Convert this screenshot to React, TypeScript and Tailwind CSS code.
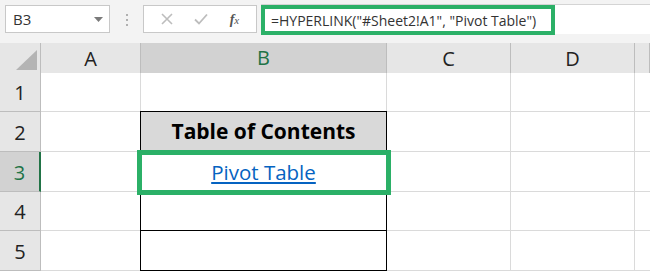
import React from "react";

const font = { fontFamily: '"Open Sans", "Noto Sans", sans-serif' };

function Toolbar() {
  return (
    <div className="flex h-[43px] bg-[#f3f3f3] pt-[4px]">
      <div className="ml-[5px] mt-[1px] flex h-[28px] w-[105px] items-center justify-between border border-[#c8c8c8] bg-white pl-[7px] pr-[6px]">
        <span className="text-[15px] text-[#333]">B3</span>
        <svg width="9" height="5" viewBox="0 0 9 5"><path d="M0 0h9L4.5 5z" fill="#7a7a7a" /></svg>
      </div>
      <div className="flex w-[33px] flex-col items-center justify-center gap-[3px] pb-[8px]">
        <span className="h-[2px] w-[2px] bg-[#b0b0b0]" />
        <span className="h-[2px] w-[2px] bg-[#b0b0b0]" />
        <span className="h-[2px] w-[2px] bg-[#b0b0b0]" />
      </div>
      <div className="mt-[1px] flex h-[28px] w-[114px] items-center justify-around border border-[#c8c8c8] bg-white px-[6px]">
        <svg width="12" height="12" viewBox="0 0 12 12"><path d="M1 1l10 10M11 1L1 11" stroke="#bdbdbd" strokeWidth="1.6" /></svg>
        <svg width="14" height="12" viewBox="0 0 14 12"><path d="M1 6.5l4 4L13 1.5" stroke="#bdbdbd" strokeWidth="1.8" fill="none" /></svg>
        <span className="text-[14px] italic text-[#555]" style={{ fontFamily: '"Liberation Serif", serif' }}>
          <b>f</b><span className="text-[11px]">x</span>
        </span>
      </div>
      <div className="ml-[4px] flex h-[30px] flex-1 border-t border-[#d4d4d4] bg-white">
        <div className="flex h-[30px] w-[294px] items-center border-[4px] border-[#2bb067] pl-[6px]">
          <span className="whitespace-nowrap text-[14px] text-[#333]" style={font}>
            =HYPERLINK("#Sheet2!A1", "Pivot Table")
          </span>
        </div>
      </div>
    </div>
  );
}

const cols = ["A", "B", "C", "D", ""];

function Header() {
  return (
    <div className="grid h-[30px] grid-cols-[41px_100px_246px_124px_124px_1fr] bg-[#e6e6e6]">
      <div className="relative border-r border-b border-[#bdbdbd]">
        <svg className="absolute left-[16px] top-[7px]" width="21" height="20" viewBox="0 0 21 20"><path d="M21 0v20H0z" fill="#b4b4b4" /></svg>
      </div>
      {cols.map((c, i) => (
        <div
          key={i}
          className={
            c === "B"
              ? "flex items-center justify-center border-r border-b-2 border-r-[#bdbdbd] border-b-[#217346] bg-[#d2d2d2] text-[20px] text-[#217346]"
              : "flex items-center justify-center border-r border-b border-[#bdbdbd] text-[20px] text-[#222]"
          }
          style={font}
        >
          {c}
        </div>
      ))}
    </div>
  );
}

function Row({ n, h, children, selected }: { n: number; h: string; children?: React.ReactNode; selected?: boolean }) {
  return (
    <div className={`grid grid-cols-[41px_100px_246px_124px_124px_1fr] ${h}`}>
      <div
        className={
          selected
            ? "flex items-center justify-center border-r-2 border-b border-r-[#217346] border-b-[#bdbdbd] bg-[#d2d2d2] pt-[2px] text-[20px] text-[#217346]"
            : "flex items-center justify-center border-r border-b border-[#bdbdbd] bg-[#e6e6e6] pt-[2px] text-[20px] text-[#222]"
        }
        style={font}
      >
        {n}
      </div>
      <div className="border-r border-b border-[#dadada] bg-white" />
      {children ?? <div className="border-r border-b border-[#dadada] bg-white" />}
      <div className="border-r border-b border-[#dadada] bg-white" />
      <div className="border-r border-b border-[#dadada] bg-white" />
      <div className="border-b border-[#dadada] bg-white" />
    </div>
  );
}

export default function App() {
  return (
    <div className="h-[271px] w-[650px] overflow-hidden bg-white" style={font}>
      <Toolbar />
      <Header />
      <div className="relative">
        <Row n={1} h="h-[39px]" />
        <Row n={2} h="h-[40px]">
          <div className="-ml-px -mt-px flex items-center justify-center border border-black bg-[#d9d9d9] pt-[1px] text-[21px] font-bold text-black">
            Table of Contents
          </div>
        </Row>
        <Row n={3} h="h-[40px]" selected>
          <div className="-ml-px flex items-center justify-center border-x border-black bg-white">
            <span className="text-[20.5px] text-[#0563c1] underline underline-offset-2">Pivot Table</span>
          </div>
        </Row>
        <Row n={4} h="h-[39px]">
          <div className="-ml-px border-x border-b border-black bg-white" />
        </Row>
        <Row n={5} h="h-[40px]">
          <div className="-ml-px border-x border-b border-black bg-white" />
        </Row>
        <div className="pointer-events-none absolute left-[137px] top-[77px] h-[45px] w-[254px] border-[5px] border-[#2bb067]" />
      </div>
    </div>
  );
}
